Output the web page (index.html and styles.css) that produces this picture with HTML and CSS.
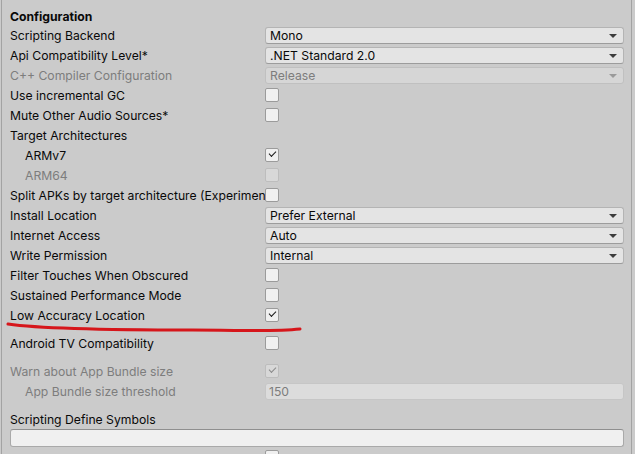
FILE: index.html
```html
<!DOCTYPE html>
<html lang="en">

<head>
  <meta charset="UTF-8">
  <meta name="viewport" content="width=device-width, initial-scale=1.0">
  <title>Player Settings</title>

  <link rel="stylesheet" href="styles.css">
</head>

<body>
  <div class="panel">
    <div class="heading">Configuration</div>

    <div class="row">
      <div class="label">Scripting Backend</div>
      <div class="dropdown">Mono</div>
    </div>
    <div class="row">
      <div class="label">Api Compatibility Level*</div>
      <div class="dropdown">.NET Standard 2.0</div>
    </div>
    <div class="row disabled">
      <div class="label">C++ Compiler Configuration</div>
      <div class="dropdown">Release</div>
    </div>
    <div class="row">
      <div class="label">Use incremental GC</div>
      <div><span class="check"></span></div>
    </div>
    <div class="row">
      <div class="label">Mute Other Audio Sources*</div>
      <div><span class="check"></span></div>
    </div>
    <div class="row">
      <div class="label">Target Architectures</div>
      <div></div>
    </div>
    <div class="row">
      <div class="label indent">ARMv7</div>
      <div><span class="check on"></span></div>
    </div>
    <div class="row disabled">
      <div class="label indent">ARM64</div>
      <div><span class="check"></span></div>
    </div>
    <div class="row">
      <div class="label">Split APKs by target architecture (Experimental)</div>
      <div><span class="check"></span></div>
    </div>
    <div class="row">
      <div class="label">Install Location</div>
      <div class="dropdown">Prefer External</div>
    </div>
    <div class="row">
      <div class="label">Internet Access</div>
      <div class="dropdown">Auto</div>
    </div>
    <div class="row">
      <div class="label">Write Permission</div>
      <div class="dropdown">Internal</div>
    </div>
    <div class="row">
      <div class="label">Filter Touches When Obscured</div>
      <div><span class="check"></span></div>
    </div>
    <div class="row">
      <div class="label">Sustained Performance Mode</div>
      <div><span class="check"></span></div>
    </div>
    <div class="row marked">
      <div class="label">Low Accuracy Location</div>
      <div><span class="check on"></span></div>
      <!-- 手画的红线 -->
      <svg class="scribble" width="310" height="16" viewBox="0 0 310 16">
        <path d="M6 4 C 40 9, 120 10, 190 10 C 240 10, 270 12, 298 9" />
      </svg>
    </div>

    <div class="row spaced">
      <div class="label">Android TV Compatibility</div>
      <div><span class="check"></span></div>
    </div>

    <div class="row spaced disabled">
      <div class="label">Warn about App Bundle size</div>
      <div><span class="check on"></span></div>
    </div>
    <div class="row disabled">
      <div class="label indent">App Bundle size threshold</div>
      <div class="textfield">150</div>
    </div>

    <div class="row spaced single">
      <div class="label">Scripting Define Symbols</div>
    </div>
    <div class="wide-field"></div>
    <div class="row">
      <div class="label"></div>
      <div><span class="check"></span></div>
    </div>
  </div>
</body>

</html>
```

FILE: styles.css
```css
/* Unity 浅色主题 Inspector */
html,
body {
  margin: 0;
  background: #cbcbcb;
  height: 100%;
  overflow: hidden;
}

body {
  font-family: Inter, "Noto Sans", sans-serif;
  font-size: 12.2px;
  color: #090909;
}

.panel {
  margin: 0 3px 0 1px;
  border-left: 1px solid #a3a3a3;
  border-right: 1px solid #a3a3a3;
  min-height: 100%;
  padding: 8px 7px 0 8px;
  box-sizing: border-box;
}

.heading {
  font-weight: 700;
  height: 17px;
  line-height: 17px;
}

.row {
  display: grid;
  grid-template-columns: 255px 1fr;
  align-items: center;
  height: 20px;
  position: relative;
}

.row.spaced {
  margin-top: 8px;
}

.row.single {
  grid-template-columns: 1fr;
}

.label {
  white-space: nowrap;
  overflow: hidden;
}

.label.indent {
  padding-left: 15px;
}

.disabled {
  color: #7d7d7d;
}

/* 下拉框 */
.dropdown {
  height: 15px;
  line-height: 15px;
  background: #e4e4e4;
  border: 1px solid #b4b4b4;
  border-bottom-color: #9c9c9c;
  border-radius: 3px;
  padding: 0 4px;
  position: relative;
}

.dropdown::after {
  content: '';
  position: absolute;
  right: 6px;
  top: 6px;
  border-left: 4px solid transparent;
  border-right: 4px solid transparent;
  border-top: 4px solid #3c3c3c;
}

.disabled .dropdown {
  background: #d6d6d6;
  border-color: #c0c0c0;
}

.disabled .dropdown::after {
  border-top-color: #9a9a9a;
}

/* 复选框 */
.check {
  display: block;
  width: 12px;
  height: 12px;
  background: #f0f0f0;
  border: 1px solid #9b9b9b;
  border-radius: 2px;
  position: relative;
}

.check.on::after {
  content: '';
  position: absolute;
  left: 3px;
  top: 2px;
  width: 6px;
  height: 3px;
  border-left: 1.5px solid #1a1a1a;
  border-bottom: 1.5px solid #1a1a1a;
  transform: rotate(-45deg);
}

.disabled .check {
  background: #d8d8d8;
  border-color: #bdbdbd;
}

.disabled .check.on::after {
  border-color: #8a8a8a;
}

.textfield {
  height: 15px;
  line-height: 15px;
  background: #dcdcdc;
  border: 1px solid #c6c6c6;
  border-radius: 3px;
  padding: 0 3px;
}

.wide-field {
  height: 16px;
  background: #f0f0f0;
  border: 1px solid #a9a9a9;
  border-top-color: #8f8f8f;
  border-radius: 3px;
}

.scribble {
  position: absolute;
  left: -8px;
  top: 15px;
  pointer-events: none;
}

.scribble path {
  fill: none;
  stroke: #d6161b;
  stroke-width: 3;
  stroke-linecap: round;
}
```
